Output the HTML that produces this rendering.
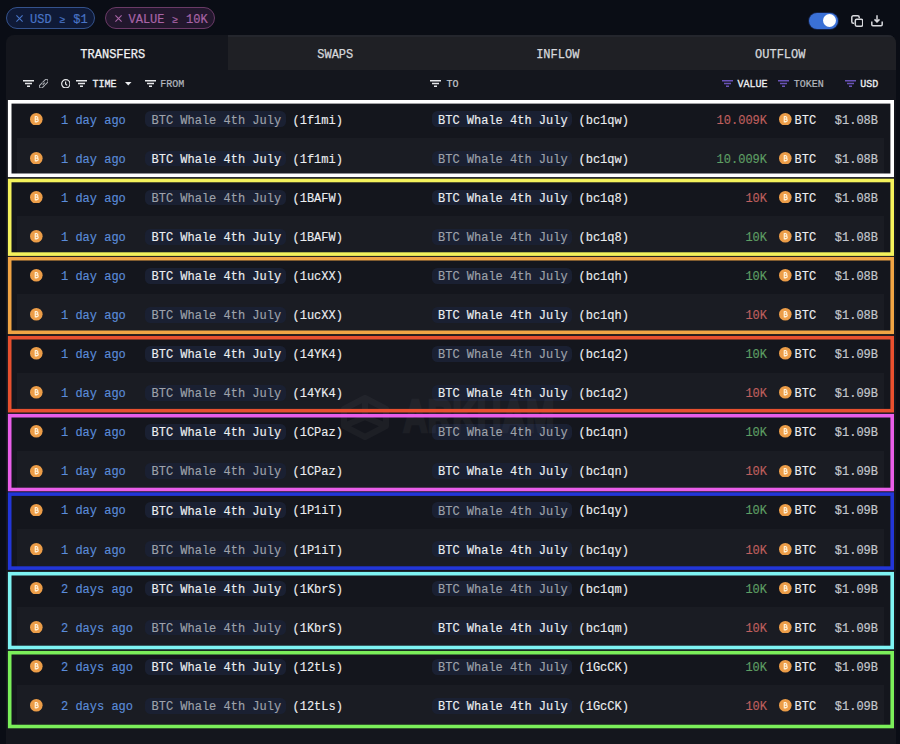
<!DOCTYPE html>
<html><head><meta charset="utf-8"><style>
*{margin:0;padding:0;box-sizing:border-box}
html,body{width:900px;height:744px;overflow:hidden;background:#0a0d15;font-family:"Liberation Mono",monospace}
.abs{position:absolute}
.chip{position:absolute;top:7px;height:22px;border-radius:11px;font-size:12px;line-height:20px;white-space:nowrap}
.chip1{left:6px;width:89px;border:1px solid #34528c;background:#0f1a37;color:#4874c6}
.chip2{left:105px;width:110px;border:1px solid #6a3a66;background:#22172d;color:#a864a6}
.chip span{position:absolute;top:1.6px;-webkit-text-stroke:0.2px currentColor}
.toggle{position:absolute;left:808.8px;top:13.2px;width:29.6px;height:15.6px;border-radius:8px;background:#3a70d6;box-shadow:0 0 0 1px #142044}
.knob{position:absolute;left:823.2px;top:14px;width:13px;height:13px;border-radius:50%;background:#fff}
.panel{position:absolute;left:6px;top:35px;width:890px;height:720px;background:#14161d;border-radius:8px 8px 0 0;overflow:hidden}
.tab{position:absolute;top:1.5px;height:36px;width:222.5px;color:#d6d8dc;font-size:12px;line-height:36px;text-align:center;padding-right:9px;-webkit-text-stroke:0.25px currentColor}
.tabbg{position:absolute;top:0;height:35.4px;background:#1f2025;border-top:2px solid #24262d}
.tab.active{color:#f2f3f5}
.hdr{position:absolute;font-size:10px;top:79.5px;line-height:10px;color:#b5b8bf;-webkit-text-stroke:0.2px currentColor;transform:scaleY(1.06);transform-origin:0 100%}
.hdr.w{color:#f0f1f3;-webkit-text-stroke:0.3px currentColor}
.row{position:absolute;left:17px;width:867px;height:39.1px;background:#14161d}
.row.alt{background:#1a1c23}
.row>div{position:absolute}
.coin{width:12.6px;height:12.6px;top:13.8px;line-height:0}
.c1{left:13px}
.c2{left:762px}
.time{left:44px;top:15.7px;font-size:12px;line-height:13px;color:#5b8cda;white-space:nowrap;-webkit-text-stroke:0.15px currentColor}
.pill{top:12.6px;height:15.8px;border-radius:5.5px;background:#1a2032;font-size:12px;line-height:16px;padding:1.2px 4.8px 0 6.5px;white-space:nowrap}
.pf{left:128px}
.pt{left:414.5px}
.dim{color:#9ea2aa;-webkit-text-stroke:0.15px currentColor}
.br{color:#eceef1;-webkit-text-stroke:0.15px currentColor}
.addr{top:13.7px;font-size:12px;line-height:16px;color:#eceef1;white-space:nowrap;-webkit-text-stroke:0.12px currentColor}
.af{left:275.5px}
.at{left:561.5px}
.val{right:117px;top:13.7px;font-size:12px;line-height:16px;white-space:nowrap;-webkit-text-stroke:0.15px currentColor}
.red{color:#bf5f5e}
.grn{color:#5e9e64}
.tok{left:777.5px;top:13.7px;font-size:12px;line-height:16px;color:#eceef1;-webkit-text-stroke:0.15px currentColor}
.usd{right:6px;top:13.7px;font-size:12px;line-height:16px;color:#c3c6cc;-webkit-text-stroke:0.2px currentColor}
.ge{font-style:normal;display:inline-block;width:7.2px;font-size:10px;text-align:center;vertical-align:0}
svg.boxes{position:absolute;left:0;top:0}
.wm{position:absolute;left:403px;top:393px;font-family:"Liberation Sans",sans-serif;font-weight:bold;font-size:46px;line-height:46px;color:#fff;-webkit-text-stroke:2.5px #fff;opacity:0.035;transform:scaleX(0.74);transform-origin:0 0;white-space:nowrap}
</style></head><body>
<div class="chip chip1"><span style="left:23px">USD <i class="ge">&#8805;</i> $1</span></div>
<svg class="abs" style="left:16px;top:14.7px" width="7" height="7" viewBox="0 0 7 7" stroke="#4874c6" stroke-width="1.1"><path d="M0.4 0.4 L6.6 6.6 M6.6 0.4 L0.4 6.6"/></svg>
<div class="chip chip2"><span style="left:22.5px">VALUE <i class="ge">&#8805;</i> 10K</span></div>
<svg class="abs" style="left:114.7px;top:14.8px" width="7" height="7" viewBox="0 0 7 7" stroke="#a864a6" stroke-width="1.1"><path d="M0.4 0.4 L6.6 6.6 M6.6 0.4 L0.4 6.6"/></svg>
<div class="toggle"></div><div class="knob"></div>
<svg class="abs" style="left:850.5px;top:15px" width="12.5" height="12" viewBox="0 0 12.5 12" fill="none" stroke="#d8d9dd" stroke-width="1.5"><path d="M3.2 8.2 H2.3 a1.5 1.5 0 0 1 -1.5 -1.5 V2.3 a1.5 1.5 0 0 1 1.5 -1.5 H6.7 a1.5 1.5 0 0 1 1.5 1.5 V3.2"/><rect x="4.3" y="4.3" width="7.4" height="6.9" rx="1.4"/></svg>
<svg class="abs" style="left:870.5px;top:15px" width="12" height="11.5" viewBox="0 0 12 11.5" fill="none" stroke="#d8d9dd" stroke-width="1.5"><path d="M6 0.3 V6.8 M3.5 4.4 L6 6.9 L8.5 4.4 M0.8 6.6 V9.6 a1.1 1.1 0 0 0 1.1 1.1 H10.1 a1.1 1.1 0 0 0 1.1 -1.1 V6.6"/></svg>
<div class="panel">
<div class="tabbg" style="left:222px;width:668px"></div>
<div class="tab active" style="left:0">TRANSFERS</div>
<div class="tab" style="left:222.5px">SWAPS</div>
<div class="tab" style="left:445px">INFLOW</div>
<div class="tab" style="left:667.5px">OUTFLOW</div>
</div>
<svg class="abs" style="left:22.7px;top:80px" width="11" height="7" viewBox="0 0 11 7" fill="#e6e7ea"><rect x="0" y="0" width="11" height="1.5"/><rect x="2" y="2.75" width="7" height="1.5"/><rect x="4" y="5.5" width="3" height="1.5"/></svg>
<svg class="abs" style="left:38.8px;top:78.8px" width="9.5" height="9.5" viewBox="0 0 9.5 9.5" fill="none" stroke="#a9acb3" stroke-width="1.1"><path d="M3.6 3.4 L6.1 0.9 a1.6 1.6 0 0 1 2.5 2.5 L6.1 5.9"/><path d="M5.9 6.1 L3.4 8.6 a1.6 1.6 0 0 1 -2.5 -2.5 L3.4 3.6"/><path d="M3.7 5.8 L5.8 3.7"/></svg>
<svg class="abs" style="left:60.5px;top:78.8px" width="9.6" height="9.6" viewBox="0 0 9.6 9.6" fill="none" stroke="#e6e7ea" stroke-width="1.2"><circle cx="4.8" cy="4.8" r="4.15"/><path d="M4.6 2.6 V5 L6.2 6.4"/></svg>
<svg class="abs" style="left:76.3px;top:80px" width="11" height="7" viewBox="0 0 11 7" fill="#e6e7ea"><rect x="0" y="0" width="11" height="1.5"/><rect x="2" y="2.75" width="7" height="1.5"/><rect x="4" y="5.5" width="3" height="1.5"/></svg>
<div class="hdr w" style="left:92.5px">TIME</div>
<svg class="abs" style="left:125px;top:82.3px" width="6.5" height="3.5" viewBox="0 0 6.5 3.5"><path d="M0 0 H6.5 L3.25 3.5Z" fill="#eceef1"/></svg>
<svg class="abs" style="left:144.5px;top:80px" width="11" height="7" viewBox="0 0 11 7" fill="#e6e7ea"><rect x="0" y="0" width="11" height="1.5"/><rect x="2" y="2.75" width="7" height="1.5"/><rect x="4" y="5.5" width="3" height="1.5"/></svg>
<div class="hdr" style="left:160.2px">FROM</div>
<svg class="abs" style="left:430px;top:80px" width="11" height="7" viewBox="0 0 11 7" fill="#e6e7ea"><rect x="0" y="0" width="11" height="1.5"/><rect x="2" y="2.75" width="7" height="1.5"/><rect x="4" y="5.5" width="3" height="1.5"/></svg>
<div class="hdr" style="left:446.5px;color:#c6c8ce">TO</div>
<svg class="abs" style="left:721.8px;top:80px" width="11" height="7" viewBox="0 0 11 7" fill="#6a53b8"><rect x="0" y="0" width="11" height="1.5"/><rect x="2" y="2.75" width="7" height="1.5"/><rect x="4" y="5.5" width="3" height="1.5"/></svg>
<div class="hdr w" style="left:737.6px">VALUE</div>
<svg class="abs" style="left:778.2px;top:80px" width="11" height="7" viewBox="0 0 11 7" fill="#6a53b8"><rect x="0" y="0" width="11" height="1.5"/><rect x="2" y="2.75" width="7" height="1.5"/><rect x="4" y="5.5" width="3" height="1.5"/></svg>
<div class="hdr" style="left:793.8px">TOKEN</div>
<svg class="abs" style="left:844.5px;top:80px" width="11" height="7" viewBox="0 0 11 7" fill="#6a53b8"><rect x="0" y="0" width="11" height="1.5"/><rect x="2" y="2.75" width="7" height="1.5"/><rect x="4" y="5.5" width="3" height="1.5"/></svg>
<div class="hdr w" style="left:860.3px">USD</div>
<div class="row" style="top:98.90px">
<div class="coin c1"><svg viewBox="0 0 13 13" width="12.6" height="12.6"><circle cx="6.5" cy="6.5" r="6.5" fill="#ec9d48"/><path d="M4.9 3.9 H6.9 a1.2 1.2 0 0 1 0 2.4 H4.9 M4.9 6.3 H7.2 a1.3 1.3 0 0 1 0 2.6 H4.9 M5.4 3.9 V8.9 M5.6 3 V3.9 M6.8 3 V3.9 M5.6 8.9 V9.8 M6.8 8.9 V9.8" fill="none" stroke="#fff1d8" stroke-width="1.2"/></svg></div>
<div class="time">1 day ago</div>
<div class="pill pf dim">BTC Whale 4th July</div><div class="addr af">(1f1mi)</div>
<div class="pill pt br">BTC Whale 4th July</div><div class="addr at">(bc1qw)</div>
<div class="val red">10.009K</div>
<div class="coin c2"><svg viewBox="0 0 13 13" width="12.6" height="12.6"><circle cx="6.5" cy="6.5" r="6.5" fill="#ec9d48"/><path d="M4.9 3.9 H6.9 a1.2 1.2 0 0 1 0 2.4 H4.9 M4.9 6.3 H7.2 a1.3 1.3 0 0 1 0 2.6 H4.9 M5.4 3.9 V8.9 M5.6 3 V3.9 M6.8 3 V3.9 M5.6 8.9 V9.8 M6.8 8.9 V9.8" fill="none" stroke="#fff1d8" stroke-width="1.2"/></svg></div><div class="tok">BTC</div>
<div class="usd">$1.08B</div>
</div><div class="row alt" style="top:137.99px">
<div class="coin c1"><svg viewBox="0 0 13 13" width="12.6" height="12.6"><circle cx="6.5" cy="6.5" r="6.5" fill="#ec9d48"/><path d="M4.9 3.9 H6.9 a1.2 1.2 0 0 1 0 2.4 H4.9 M4.9 6.3 H7.2 a1.3 1.3 0 0 1 0 2.6 H4.9 M5.4 3.9 V8.9 M5.6 3 V3.9 M6.8 3 V3.9 M5.6 8.9 V9.8 M6.8 8.9 V9.8" fill="none" stroke="#fff1d8" stroke-width="1.2"/></svg></div>
<div class="time">1 day ago</div>
<div class="pill pf br">BTC Whale 4th July</div><div class="addr af">(1f1mi)</div>
<div class="pill pt dim">BTC Whale 4th July</div><div class="addr at">(bc1qw)</div>
<div class="val grn">10.009K</div>
<div class="coin c2"><svg viewBox="0 0 13 13" width="12.6" height="12.6"><circle cx="6.5" cy="6.5" r="6.5" fill="#ec9d48"/><path d="M4.9 3.9 H6.9 a1.2 1.2 0 0 1 0 2.4 H4.9 M4.9 6.3 H7.2 a1.3 1.3 0 0 1 0 2.6 H4.9 M5.4 3.9 V8.9 M5.6 3 V3.9 M6.8 3 V3.9 M5.6 8.9 V9.8 M6.8 8.9 V9.8" fill="none" stroke="#fff1d8" stroke-width="1.2"/></svg></div><div class="tok">BTC</div>
<div class="usd">$1.08B</div>
</div><div class="row" style="top:177.08px">
<div class="coin c1"><svg viewBox="0 0 13 13" width="12.6" height="12.6"><circle cx="6.5" cy="6.5" r="6.5" fill="#ec9d48"/><path d="M4.9 3.9 H6.9 a1.2 1.2 0 0 1 0 2.4 H4.9 M4.9 6.3 H7.2 a1.3 1.3 0 0 1 0 2.6 H4.9 M5.4 3.9 V8.9 M5.6 3 V3.9 M6.8 3 V3.9 M5.6 8.9 V9.8 M6.8 8.9 V9.8" fill="none" stroke="#fff1d8" stroke-width="1.2"/></svg></div>
<div class="time">1 day ago</div>
<div class="pill pf dim">BTC Whale 4th July</div><div class="addr af">(1BAFW)</div>
<div class="pill pt br">BTC Whale 4th July</div><div class="addr at">(bc1q8)</div>
<div class="val red">10K</div>
<div class="coin c2"><svg viewBox="0 0 13 13" width="12.6" height="12.6"><circle cx="6.5" cy="6.5" r="6.5" fill="#ec9d48"/><path d="M4.9 3.9 H6.9 a1.2 1.2 0 0 1 0 2.4 H4.9 M4.9 6.3 H7.2 a1.3 1.3 0 0 1 0 2.6 H4.9 M5.4 3.9 V8.9 M5.6 3 V3.9 M6.8 3 V3.9 M5.6 8.9 V9.8 M6.8 8.9 V9.8" fill="none" stroke="#fff1d8" stroke-width="1.2"/></svg></div><div class="tok">BTC</div>
<div class="usd">$1.08B</div>
</div><div class="row alt" style="top:216.17px">
<div class="coin c1"><svg viewBox="0 0 13 13" width="12.6" height="12.6"><circle cx="6.5" cy="6.5" r="6.5" fill="#ec9d48"/><path d="M4.9 3.9 H6.9 a1.2 1.2 0 0 1 0 2.4 H4.9 M4.9 6.3 H7.2 a1.3 1.3 0 0 1 0 2.6 H4.9 M5.4 3.9 V8.9 M5.6 3 V3.9 M6.8 3 V3.9 M5.6 8.9 V9.8 M6.8 8.9 V9.8" fill="none" stroke="#fff1d8" stroke-width="1.2"/></svg></div>
<div class="time">1 day ago</div>
<div class="pill pf br">BTC Whale 4th July</div><div class="addr af">(1BAFW)</div>
<div class="pill pt dim">BTC Whale 4th July</div><div class="addr at">(bc1q8)</div>
<div class="val grn">10K</div>
<div class="coin c2"><svg viewBox="0 0 13 13" width="12.6" height="12.6"><circle cx="6.5" cy="6.5" r="6.5" fill="#ec9d48"/><path d="M4.9 3.9 H6.9 a1.2 1.2 0 0 1 0 2.4 H4.9 M4.9 6.3 H7.2 a1.3 1.3 0 0 1 0 2.6 H4.9 M5.4 3.9 V8.9 M5.6 3 V3.9 M6.8 3 V3.9 M5.6 8.9 V9.8 M6.8 8.9 V9.8" fill="none" stroke="#fff1d8" stroke-width="1.2"/></svg></div><div class="tok">BTC</div>
<div class="usd">$1.08B</div>
</div><div class="row" style="top:255.26px">
<div class="coin c1"><svg viewBox="0 0 13 13" width="12.6" height="12.6"><circle cx="6.5" cy="6.5" r="6.5" fill="#ec9d48"/><path d="M4.9 3.9 H6.9 a1.2 1.2 0 0 1 0 2.4 H4.9 M4.9 6.3 H7.2 a1.3 1.3 0 0 1 0 2.6 H4.9 M5.4 3.9 V8.9 M5.6 3 V3.9 M6.8 3 V3.9 M5.6 8.9 V9.8 M6.8 8.9 V9.8" fill="none" stroke="#fff1d8" stroke-width="1.2"/></svg></div>
<div class="time">1 day ago</div>
<div class="pill pf br">BTC Whale 4th July</div><div class="addr af">(1ucXX)</div>
<div class="pill pt dim">BTC Whale 4th July</div><div class="addr at">(bc1qh)</div>
<div class="val grn">10K</div>
<div class="coin c2"><svg viewBox="0 0 13 13" width="12.6" height="12.6"><circle cx="6.5" cy="6.5" r="6.5" fill="#ec9d48"/><path d="M4.9 3.9 H6.9 a1.2 1.2 0 0 1 0 2.4 H4.9 M4.9 6.3 H7.2 a1.3 1.3 0 0 1 0 2.6 H4.9 M5.4 3.9 V8.9 M5.6 3 V3.9 M6.8 3 V3.9 M5.6 8.9 V9.8 M6.8 8.9 V9.8" fill="none" stroke="#fff1d8" stroke-width="1.2"/></svg></div><div class="tok">BTC</div>
<div class="usd">$1.08B</div>
</div><div class="row alt" style="top:294.35px">
<div class="coin c1"><svg viewBox="0 0 13 13" width="12.6" height="12.6"><circle cx="6.5" cy="6.5" r="6.5" fill="#ec9d48"/><path d="M4.9 3.9 H6.9 a1.2 1.2 0 0 1 0 2.4 H4.9 M4.9 6.3 H7.2 a1.3 1.3 0 0 1 0 2.6 H4.9 M5.4 3.9 V8.9 M5.6 3 V3.9 M6.8 3 V3.9 M5.6 8.9 V9.8 M6.8 8.9 V9.8" fill="none" stroke="#fff1d8" stroke-width="1.2"/></svg></div>
<div class="time">1 day ago</div>
<div class="pill pf dim">BTC Whale 4th July</div><div class="addr af">(1ucXX)</div>
<div class="pill pt br">BTC Whale 4th July</div><div class="addr at">(bc1qh)</div>
<div class="val red">10K</div>
<div class="coin c2"><svg viewBox="0 0 13 13" width="12.6" height="12.6"><circle cx="6.5" cy="6.5" r="6.5" fill="#ec9d48"/><path d="M4.9 3.9 H6.9 a1.2 1.2 0 0 1 0 2.4 H4.9 M4.9 6.3 H7.2 a1.3 1.3 0 0 1 0 2.6 H4.9 M5.4 3.9 V8.9 M5.6 3 V3.9 M6.8 3 V3.9 M5.6 8.9 V9.8 M6.8 8.9 V9.8" fill="none" stroke="#fff1d8" stroke-width="1.2"/></svg></div><div class="tok">BTC</div>
<div class="usd">$1.08B</div>
</div><div class="row" style="top:333.44px">
<div class="coin c1"><svg viewBox="0 0 13 13" width="12.6" height="12.6"><circle cx="6.5" cy="6.5" r="6.5" fill="#ec9d48"/><path d="M4.9 3.9 H6.9 a1.2 1.2 0 0 1 0 2.4 H4.9 M4.9 6.3 H7.2 a1.3 1.3 0 0 1 0 2.6 H4.9 M5.4 3.9 V8.9 M5.6 3 V3.9 M6.8 3 V3.9 M5.6 8.9 V9.8 M6.8 8.9 V9.8" fill="none" stroke="#fff1d8" stroke-width="1.2"/></svg></div>
<div class="time">1 day ago</div>
<div class="pill pf br">BTC Whale 4th July</div><div class="addr af">(14YK4)</div>
<div class="pill pt dim">BTC Whale 4th July</div><div class="addr at">(bc1q2)</div>
<div class="val grn">10K</div>
<div class="coin c2"><svg viewBox="0 0 13 13" width="12.6" height="12.6"><circle cx="6.5" cy="6.5" r="6.5" fill="#ec9d48"/><path d="M4.9 3.9 H6.9 a1.2 1.2 0 0 1 0 2.4 H4.9 M4.9 6.3 H7.2 a1.3 1.3 0 0 1 0 2.6 H4.9 M5.4 3.9 V8.9 M5.6 3 V3.9 M6.8 3 V3.9 M5.6 8.9 V9.8 M6.8 8.9 V9.8" fill="none" stroke="#fff1d8" stroke-width="1.2"/></svg></div><div class="tok">BTC</div>
<div class="usd">$1.09B</div>
</div><div class="row alt" style="top:372.53px">
<div class="coin c1"><svg viewBox="0 0 13 13" width="12.6" height="12.6"><circle cx="6.5" cy="6.5" r="6.5" fill="#ec9d48"/><path d="M4.9 3.9 H6.9 a1.2 1.2 0 0 1 0 2.4 H4.9 M4.9 6.3 H7.2 a1.3 1.3 0 0 1 0 2.6 H4.9 M5.4 3.9 V8.9 M5.6 3 V3.9 M6.8 3 V3.9 M5.6 8.9 V9.8 M6.8 8.9 V9.8" fill="none" stroke="#fff1d8" stroke-width="1.2"/></svg></div>
<div class="time">1 day ago</div>
<div class="pill pf dim">BTC Whale 4th July</div><div class="addr af">(14YK4)</div>
<div class="pill pt br">BTC Whale 4th July</div><div class="addr at">(bc1q2)</div>
<div class="val red">10K</div>
<div class="coin c2"><svg viewBox="0 0 13 13" width="12.6" height="12.6"><circle cx="6.5" cy="6.5" r="6.5" fill="#ec9d48"/><path d="M4.9 3.9 H6.9 a1.2 1.2 0 0 1 0 2.4 H4.9 M4.9 6.3 H7.2 a1.3 1.3 0 0 1 0 2.6 H4.9 M5.4 3.9 V8.9 M5.6 3 V3.9 M6.8 3 V3.9 M5.6 8.9 V9.8 M6.8 8.9 V9.8" fill="none" stroke="#fff1d8" stroke-width="1.2"/></svg></div><div class="tok">BTC</div>
<div class="usd">$1.09B</div>
</div><div class="row" style="top:411.62px">
<div class="coin c1"><svg viewBox="0 0 13 13" width="12.6" height="12.6"><circle cx="6.5" cy="6.5" r="6.5" fill="#ec9d48"/><path d="M4.9 3.9 H6.9 a1.2 1.2 0 0 1 0 2.4 H4.9 M4.9 6.3 H7.2 a1.3 1.3 0 0 1 0 2.6 H4.9 M5.4 3.9 V8.9 M5.6 3 V3.9 M6.8 3 V3.9 M5.6 8.9 V9.8 M6.8 8.9 V9.8" fill="none" stroke="#fff1d8" stroke-width="1.2"/></svg></div>
<div class="time">1 day ago</div>
<div class="pill pf br">BTC Whale 4th July</div><div class="addr af">(1CPaz)</div>
<div class="pill pt dim">BTC Whale 4th July</div><div class="addr at">(bc1qn)</div>
<div class="val grn">10K</div>
<div class="coin c2"><svg viewBox="0 0 13 13" width="12.6" height="12.6"><circle cx="6.5" cy="6.5" r="6.5" fill="#ec9d48"/><path d="M4.9 3.9 H6.9 a1.2 1.2 0 0 1 0 2.4 H4.9 M4.9 6.3 H7.2 a1.3 1.3 0 0 1 0 2.6 H4.9 M5.4 3.9 V8.9 M5.6 3 V3.9 M6.8 3 V3.9 M5.6 8.9 V9.8 M6.8 8.9 V9.8" fill="none" stroke="#fff1d8" stroke-width="1.2"/></svg></div><div class="tok">BTC</div>
<div class="usd">$1.09B</div>
</div><div class="row alt" style="top:450.71px">
<div class="coin c1"><svg viewBox="0 0 13 13" width="12.6" height="12.6"><circle cx="6.5" cy="6.5" r="6.5" fill="#ec9d48"/><path d="M4.9 3.9 H6.9 a1.2 1.2 0 0 1 0 2.4 H4.9 M4.9 6.3 H7.2 a1.3 1.3 0 0 1 0 2.6 H4.9 M5.4 3.9 V8.9 M5.6 3 V3.9 M6.8 3 V3.9 M5.6 8.9 V9.8 M6.8 8.9 V9.8" fill="none" stroke="#fff1d8" stroke-width="1.2"/></svg></div>
<div class="time">1 day ago</div>
<div class="pill pf dim">BTC Whale 4th July</div><div class="addr af">(1CPaz)</div>
<div class="pill pt br">BTC Whale 4th July</div><div class="addr at">(bc1qn)</div>
<div class="val red">10K</div>
<div class="coin c2"><svg viewBox="0 0 13 13" width="12.6" height="12.6"><circle cx="6.5" cy="6.5" r="6.5" fill="#ec9d48"/><path d="M4.9 3.9 H6.9 a1.2 1.2 0 0 1 0 2.4 H4.9 M4.9 6.3 H7.2 a1.3 1.3 0 0 1 0 2.6 H4.9 M5.4 3.9 V8.9 M5.6 3 V3.9 M6.8 3 V3.9 M5.6 8.9 V9.8 M6.8 8.9 V9.8" fill="none" stroke="#fff1d8" stroke-width="1.2"/></svg></div><div class="tok">BTC</div>
<div class="usd">$1.09B</div>
</div><div class="row" style="top:489.80px">
<div class="coin c1"><svg viewBox="0 0 13 13" width="12.6" height="12.6"><circle cx="6.5" cy="6.5" r="6.5" fill="#ec9d48"/><path d="M4.9 3.9 H6.9 a1.2 1.2 0 0 1 0 2.4 H4.9 M4.9 6.3 H7.2 a1.3 1.3 0 0 1 0 2.6 H4.9 M5.4 3.9 V8.9 M5.6 3 V3.9 M6.8 3 V3.9 M5.6 8.9 V9.8 M6.8 8.9 V9.8" fill="none" stroke="#fff1d8" stroke-width="1.2"/></svg></div>
<div class="time">1 day ago</div>
<div class="pill pf br">BTC Whale 4th July</div><div class="addr af">(1P1iT)</div>
<div class="pill pt dim">BTC Whale 4th July</div><div class="addr at">(bc1qy)</div>
<div class="val grn">10K</div>
<div class="coin c2"><svg viewBox="0 0 13 13" width="12.6" height="12.6"><circle cx="6.5" cy="6.5" r="6.5" fill="#ec9d48"/><path d="M4.9 3.9 H6.9 a1.2 1.2 0 0 1 0 2.4 H4.9 M4.9 6.3 H7.2 a1.3 1.3 0 0 1 0 2.6 H4.9 M5.4 3.9 V8.9 M5.6 3 V3.9 M6.8 3 V3.9 M5.6 8.9 V9.8 M6.8 8.9 V9.8" fill="none" stroke="#fff1d8" stroke-width="1.2"/></svg></div><div class="tok">BTC</div>
<div class="usd">$1.09B</div>
</div><div class="row alt" style="top:528.89px">
<div class="coin c1"><svg viewBox="0 0 13 13" width="12.6" height="12.6"><circle cx="6.5" cy="6.5" r="6.5" fill="#ec9d48"/><path d="M4.9 3.9 H6.9 a1.2 1.2 0 0 1 0 2.4 H4.9 M4.9 6.3 H7.2 a1.3 1.3 0 0 1 0 2.6 H4.9 M5.4 3.9 V8.9 M5.6 3 V3.9 M6.8 3 V3.9 M5.6 8.9 V9.8 M6.8 8.9 V9.8" fill="none" stroke="#fff1d8" stroke-width="1.2"/></svg></div>
<div class="time">1 day ago</div>
<div class="pill pf dim">BTC Whale 4th July</div><div class="addr af">(1P1iT)</div>
<div class="pill pt br">BTC Whale 4th July</div><div class="addr at">(bc1qy)</div>
<div class="val red">10K</div>
<div class="coin c2"><svg viewBox="0 0 13 13" width="12.6" height="12.6"><circle cx="6.5" cy="6.5" r="6.5" fill="#ec9d48"/><path d="M4.9 3.9 H6.9 a1.2 1.2 0 0 1 0 2.4 H4.9 M4.9 6.3 H7.2 a1.3 1.3 0 0 1 0 2.6 H4.9 M5.4 3.9 V8.9 M5.6 3 V3.9 M6.8 3 V3.9 M5.6 8.9 V9.8 M6.8 8.9 V9.8" fill="none" stroke="#fff1d8" stroke-width="1.2"/></svg></div><div class="tok">BTC</div>
<div class="usd">$1.09B</div>
</div><div class="row" style="top:567.98px">
<div class="coin c1"><svg viewBox="0 0 13 13" width="12.6" height="12.6"><circle cx="6.5" cy="6.5" r="6.5" fill="#ec9d48"/><path d="M4.9 3.9 H6.9 a1.2 1.2 0 0 1 0 2.4 H4.9 M4.9 6.3 H7.2 a1.3 1.3 0 0 1 0 2.6 H4.9 M5.4 3.9 V8.9 M5.6 3 V3.9 M6.8 3 V3.9 M5.6 8.9 V9.8 M6.8 8.9 V9.8" fill="none" stroke="#fff1d8" stroke-width="1.2"/></svg></div>
<div class="time">2 days ago</div>
<div class="pill pf br">BTC Whale 4th July</div><div class="addr af">(1KbrS)</div>
<div class="pill pt dim">BTC Whale 4th July</div><div class="addr at">(bc1qm)</div>
<div class="val grn">10K</div>
<div class="coin c2"><svg viewBox="0 0 13 13" width="12.6" height="12.6"><circle cx="6.5" cy="6.5" r="6.5" fill="#ec9d48"/><path d="M4.9 3.9 H6.9 a1.2 1.2 0 0 1 0 2.4 H4.9 M4.9 6.3 H7.2 a1.3 1.3 0 0 1 0 2.6 H4.9 M5.4 3.9 V8.9 M5.6 3 V3.9 M6.8 3 V3.9 M5.6 8.9 V9.8 M6.8 8.9 V9.8" fill="none" stroke="#fff1d8" stroke-width="1.2"/></svg></div><div class="tok">BTC</div>
<div class="usd">$1.09B</div>
</div><div class="row alt" style="top:607.07px">
<div class="coin c1"><svg viewBox="0 0 13 13" width="12.6" height="12.6"><circle cx="6.5" cy="6.5" r="6.5" fill="#ec9d48"/><path d="M4.9 3.9 H6.9 a1.2 1.2 0 0 1 0 2.4 H4.9 M4.9 6.3 H7.2 a1.3 1.3 0 0 1 0 2.6 H4.9 M5.4 3.9 V8.9 M5.6 3 V3.9 M6.8 3 V3.9 M5.6 8.9 V9.8 M6.8 8.9 V9.8" fill="none" stroke="#fff1d8" stroke-width="1.2"/></svg></div>
<div class="time">2 days ago</div>
<div class="pill pf dim">BTC Whale 4th July</div><div class="addr af">(1KbrS)</div>
<div class="pill pt br">BTC Whale 4th July</div><div class="addr at">(bc1qm)</div>
<div class="val red">10K</div>
<div class="coin c2"><svg viewBox="0 0 13 13" width="12.6" height="12.6"><circle cx="6.5" cy="6.5" r="6.5" fill="#ec9d48"/><path d="M4.9 3.9 H6.9 a1.2 1.2 0 0 1 0 2.4 H4.9 M4.9 6.3 H7.2 a1.3 1.3 0 0 1 0 2.6 H4.9 M5.4 3.9 V8.9 M5.6 3 V3.9 M6.8 3 V3.9 M5.6 8.9 V9.8 M6.8 8.9 V9.8" fill="none" stroke="#fff1d8" stroke-width="1.2"/></svg></div><div class="tok">BTC</div>
<div class="usd">$1.09B</div>
</div><div class="row" style="top:646.16px">
<div class="coin c1"><svg viewBox="0 0 13 13" width="12.6" height="12.6"><circle cx="6.5" cy="6.5" r="6.5" fill="#ec9d48"/><path d="M4.9 3.9 H6.9 a1.2 1.2 0 0 1 0 2.4 H4.9 M4.9 6.3 H7.2 a1.3 1.3 0 0 1 0 2.6 H4.9 M5.4 3.9 V8.9 M5.6 3 V3.9 M6.8 3 V3.9 M5.6 8.9 V9.8 M6.8 8.9 V9.8" fill="none" stroke="#fff1d8" stroke-width="1.2"/></svg></div>
<div class="time">2 days ago</div>
<div class="pill pf br">BTC Whale 4th July</div><div class="addr af">(12tLs)</div>
<div class="pill pt dim">BTC Whale 4th July</div><div class="addr at">(1GcCK)</div>
<div class="val grn">10K</div>
<div class="coin c2"><svg viewBox="0 0 13 13" width="12.6" height="12.6"><circle cx="6.5" cy="6.5" r="6.5" fill="#ec9d48"/><path d="M4.9 3.9 H6.9 a1.2 1.2 0 0 1 0 2.4 H4.9 M4.9 6.3 H7.2 a1.3 1.3 0 0 1 0 2.6 H4.9 M5.4 3.9 V8.9 M5.6 3 V3.9 M6.8 3 V3.9 M5.6 8.9 V9.8 M6.8 8.9 V9.8" fill="none" stroke="#fff1d8" stroke-width="1.2"/></svg></div><div class="tok">BTC</div>
<div class="usd">$1.09B</div>
</div><div class="row alt" style="top:685.25px">
<div class="coin c1"><svg viewBox="0 0 13 13" width="12.6" height="12.6"><circle cx="6.5" cy="6.5" r="6.5" fill="#ec9d48"/><path d="M4.9 3.9 H6.9 a1.2 1.2 0 0 1 0 2.4 H4.9 M4.9 6.3 H7.2 a1.3 1.3 0 0 1 0 2.6 H4.9 M5.4 3.9 V8.9 M5.6 3 V3.9 M6.8 3 V3.9 M5.6 8.9 V9.8 M6.8 8.9 V9.8" fill="none" stroke="#fff1d8" stroke-width="1.2"/></svg></div>
<div class="time">2 days ago</div>
<div class="pill pf dim">BTC Whale 4th July</div><div class="addr af">(12tLs)</div>
<div class="pill pt br">BTC Whale 4th July</div><div class="addr at">(1GcCK)</div>
<div class="val red">10K</div>
<div class="coin c2"><svg viewBox="0 0 13 13" width="12.6" height="12.6"><circle cx="6.5" cy="6.5" r="6.5" fill="#ec9d48"/><path d="M4.9 3.9 H6.9 a1.2 1.2 0 0 1 0 2.4 H4.9 M4.9 6.3 H7.2 a1.3 1.3 0 0 1 0 2.6 H4.9 M5.4 3.9 V8.9 M5.6 3 V3.9 M6.8 3 V3.9 M5.6 8.9 V9.8 M6.8 8.9 V9.8" fill="none" stroke="#fff1d8" stroke-width="1.2"/></svg></div><div class="tok">BTC</div>
<div class="usd">$1.09B</div>
</div>
<div class="wm">ARKHAM</div><svg class="abs" style="left:339px;top:394px;opacity:0.035" width="52" height="46" viewBox="0 0 52 46" fill="none" stroke="#fff" stroke-width="6" stroke-linejoin="round"><path d="M26 4 L47 15 V32 L26 43 L5 32 V15 Z M26 4 V23 L47 32 M26 23 L5 32"/></svg>
<svg class="boxes" width="900" height="744"><rect x="9.70" y="101.80" width="882.50" height="73.50" fill="none" stroke="#ffffff" stroke-width="3.6"/><rect x="9.70" y="180.50" width="882.50" height="73.60" fill="none" stroke="#f4f25c" stroke-width="3.6"/><rect x="9.70" y="258.70" width="882.50" height="73.60" fill="none" stroke="#f0a444" stroke-width="3.6"/><rect x="9.70" y="337.70" width="882.50" height="73.00" fill="none" stroke="#e8502f" stroke-width="3.6"/><rect x="9.70" y="415.70" width="882.50" height="73.80" fill="none" stroke="#e95ee9" stroke-width="3.6"/><rect x="9.70" y="494.10" width="882.50" height="74.00" fill="none" stroke="#2236d8" stroke-width="3.6"/><rect x="9.70" y="573.70" width="882.50" height="73.80" fill="none" stroke="#7ef3f3" stroke-width="3.6"/><rect x="9.70" y="652.70" width="882.50" height="73.80" fill="none" stroke="#7bef5a" stroke-width="3.6"/></svg>
</body></html>
